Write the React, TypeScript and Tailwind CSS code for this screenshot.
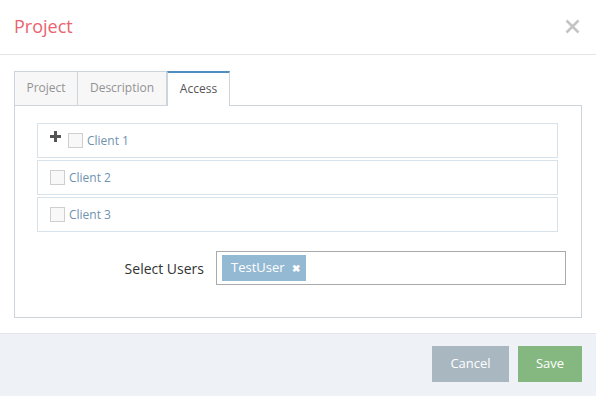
import React from "react";

const clients = ["Client 1", "Client 2", "Client 3"];

const Checkbox = () => (
  <span className="inline-block h-[15px] w-[15px] border border-[#cfcfcf] bg-[#f8f8f8]" />
);

const App = () => {
  return (
    <div
      className="flex h-[396px] w-[596px] flex-col bg-white"
      style={{ fontFamily: '"Open Sans", "Liberation Sans", sans-serif' }}
    >
      {/* header */}
      <div className="flex h-[55px] items-center justify-between border-b border-[#e5e5e5] pl-[14px] pr-[16px]">
        <div className="pb-[2px] text-[18px] text-[#e8646f]">Project</div>
        <svg width="15" height="15" viewBox="0 0 15 15" className="mb-[1px]">
          <path d="M1.5 1.5 L13.5 13.5 M13.5 1.5 L1.5 13.5" stroke="#c4c4c4" strokeWidth="2.6" />
        </svg>
      </div>

      {/* body */}
      <div className="px-[14px] pt-[16px]">
        <div className="flex h-[34px] items-end">
          <div className="flex h-[34px] w-[64px] items-center justify-center border border-b-0 border-[#cdd4dc] bg-[#f7f7f7] pb-[1px] text-[12px] text-[#939393]">
            Project
          </div>
          <div className="flex h-[34px] w-[89px] items-center justify-center border border-b-0 border-l-0 border-[#cdd4dc] bg-[#f7f7f7] pb-[1px] text-[12px] text-[#939393]">
            Description
          </div>
          <div className="relative z-10 -mb-px flex h-[35px] w-[63px] items-center justify-center border-x border-t-2 border-[#cdd4dc] border-t-[#4f8fc0] bg-white pb-[1px] text-[12px] text-[#555]">
            Access
          </div>
        </div>
        <div className="h-[213px] border border-[#cdd4dc] pl-[22px] pr-[23px] pt-[17px]">
          <div className="flex flex-col gap-[2px]">
            {clients.map((c, i) => (
              <div
                key={c}
                className="flex h-[35px] items-center gap-[4px] border border-[#d7e2ea] pl-[12px]"
              >
                {i === 0 && (
                  <svg width="11" height="11" viewBox="0 0 11 11" className="mr-[3px] -mt-[8px]">
                    <path d="M4 0h3v4h4v3h-4v4h-3v-4h-4v-3h4z" fill="#555" />
                  </svg>
                )}
                <Checkbox />
                <span className="text-[12px] text-[#6f93ae]">{c}</span>
              </div>
            ))}
          </div>
          <div className="mt-[19px] flex items-center">
            <div className="w-[179px] shrink-0 pr-[12px] text-right text-[14px] text-[#333]">
              Select Users
            </div>
            <div className="flex h-[34px] w-[350px] shrink-0 items-center border border-[#aaa] px-[5px]">
              <span className="flex h-[26px] items-center gap-[7px] bg-[#94b9d3] pl-[9px] pr-[6px] text-[13px] text-white">
                TestUser
                <span className="text-[10px] font-bold leading-none">✖</span>
              </span>
            </div>
          </div>
        </div>
      </div>

      {/* footer */}
      <div className="mt-[15px] flex flex-1 items-start justify-end gap-[9px] border-t border-[#e2e5ea] bg-[#eef1f6] pr-[14px] pt-[12px]">
        <button className="h-[36px] w-[77px] bg-[#a9b7c1] text-[13px] text-white">
          Cancel
        </button>
        <button className="h-[36px] w-[64px] bg-[#85b880] text-[13px] text-white">
          Save
        </button>
      </div>
    </div>
  );
};

export default App;
